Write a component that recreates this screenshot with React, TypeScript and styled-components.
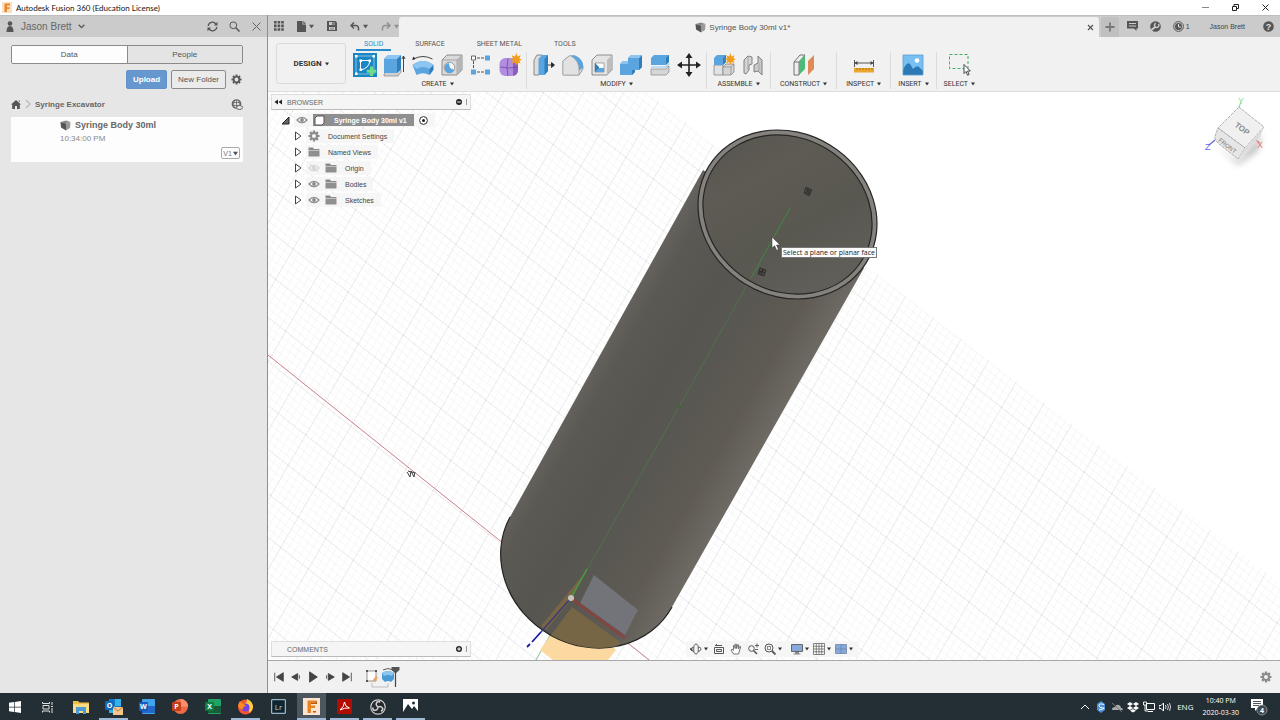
import React from "react";
import styled, { createGlobalStyle } from "styled-components";

const Global = createGlobalStyle`
  * { box-sizing: border-box; }
  body { margin: 0; font-family: "Liberation Sans", Arial, sans-serif; font-size: 8px; color: #444; }
  button, input { font: inherit; color: inherit; }
  button { background: none; border: 0; padding: 0; display: inline-flex; align-items: center; justify-content: center; }
  svg { display: block; flex: none; }
  h1, h2, p, ul { margin: 0; padding: 0; font: inherit; }
  ul { list-style: none; }
`;

/* ---------- shell ---------- */

const Desktop = styled.div`
  min-height: 100vh;
  display: flex;
  flex-direction: column;
  background: #f1f1f1;
  overflow: hidden;
`;

const TitleBar = styled.header`
  height: 15px;
  display: flex;
  align-items: center;
  padding: 0 8px 0 2px;
  gap: 4px;
  background: #fff;
  color: #111;
  font-family: Lato, "Open Sans", sans-serif;
`;
const WindowTitle = styled.h1`
  flex: 1;
  font-size: 8px;
  line-height: 14px;
`;
const WindowButtons = styled.div`
  display: flex;
  gap: 17px;
  color: #222;
`;

const Body = styled.main`
  flex: 1;
  display: flex;
  min-height: 0;
`;

/* ---------- data panel ---------- */

const DataPanel = styled.aside`
  width: 268px;
  flex: none;
  background: #e6e6e6;
  border-right: 1px solid #8f8f8f;
`;
const PanelHeader = styled.div`
  height: 22px;
  display: flex;
  align-items: center;
  gap: 11px;
  padding: 0 5px 1px 5px;
  background: #cbcbcb;
  border-top: 1px solid #bdbdbd;
  color: #5a5a5a;
`;
const UserMenu = styled.button`
  gap: 6px;
  margin-right: auto;
  font-size: 10px;
  color: #666;
`;
const PanelBody = styled.div`
  padding: 8px 24px 0 11px;
`;
const TabPair = styled.div`
  display: flex;
  height: 19px;
  border: 1px solid #8b8b8b;
  border-radius: 2px;
  overflow: hidden;
`;
const PairTab = styled.button<{ $active?: boolean }>`
  flex: 1;
  font-size: 8px;
  color: #555;
  background: ${(p) => (p.$active ? "#fdfdfd" : "#e4e4e4")};
  & + & { border-left: 1px solid #8b8b8b; }
`;
const Actions = styled.div`
  display: flex;
  justify-content: flex-end;
  align-items: center;
  gap: 4px;
  margin-top: 6px;
  color: #555;
`;
const ActionButton = styled.button<{ $primary?: boolean }>`
  height: 19px;
  padding: 0 6px;
  font-size: 8px;
  border-radius: 2px;
  border: 1px solid ${(p) => (p.$primary ? "#6192c8" : "#8b8b8b")};
  background: ${(p) => (p.$primary ? "#6698cf" : "#ebebeb")};
  color: ${(p) => (p.$primary ? "#fff" : "#555")};
  font-weight: ${(p) => (p.$primary ? 700 : 400)};
`;
const GearButton = styled.button`
  width: 13px;
  height: 19px;
`;
const Crumbs = styled.nav`
  display: flex;
  align-items: center;
  height: 12px;
  margin-top: 9px;
  gap: 3px;
  font-size: 8px;
  font-weight: 700;
  color: #666;
  span { flex: 1; }
`;
const FileCard = styled.article`
  margin-top: 7px;
  height: 45px;
  background: #fdfdfd;
  padding: 2px 3px 2px 49px;
  display: flex;
  flex-direction: column;
`;
const FileName = styled.h2`
  display: flex;
  align-items: center;
  gap: 4px;
  font-size: 9px;
  line-height: 13px;
  font-weight: 700;
  color: #666;
`;
const FileTime = styled.p`
  font-size: 8px;
  line-height: 13px;
  color: #8a8a8a;
`;
const Version = styled.button`
  align-self: flex-end;
  margin-top: 2px;
  height: 12px;
  width: 19px;
  gap: 1px;
  border: 1px solid #aaa;
  border-radius: 2px;
  font-size: 7px;
  color: #777;
`;

/* ---------- workspace ---------- */

const Workspace = styled.section`
  flex: 1;
  min-width: 0;
  display: flex;
  flex-direction: column;
`;
const AppBar = styled.div`
  height: 22px;
  display: flex;
  background: #cbcbcb;
  border-top: 1px solid #bdbdbd;
  color: #5a5a5a;
`;
const QuickAccess = styled.div`
  width: 131px;
  flex: none;
  display: flex;
  align-items: center;
  gap: 13px;
  padding: 0 0 1px 6px;
`;
const QuickButton = styled.button<{ $faded?: boolean }>`
  gap: 3px;
  opacity: ${(p) => (p.$faded ? 0.5 : 1)};
`;
const DocumentTab = styled.div`
  flex: 1;
  display: flex;
  align-items: center;
  margin-top: 1px;
  padding: 0 5px 0 0;
  background: #f1f1f1;
  border-radius: 3px 3px 0 0;
`;
const DocumentName = styled.span`
  flex: 1;
  display: flex;
  justify-content: center;
  align-items: center;
  gap: 3px;
  font-size: 8px;
  color: #555;
`;
const AccountBar = styled.div`
  display: flex;
  align-items: center;
  gap: 12px;
  padding: 0 6px 1px 2px;
  font-size: 7px;
  color: #444;
`;
const AddTab = styled.button`
  align-self: stretch;
  width: 18px;
  background: #c0c0c0;
  border-radius: 3px 3px 0 0;
  margin: 1px -4px -1px 0;
`;
const AccountButton = styled.button<{ $name?: boolean }>`
  gap: 2px;
  padding: ${(p) => (p.$name ? "0 6px 0 8px" : "0")};
`;

const Ribbon = styled.div`
  height: 55px;
  display: flex;
  background: #f1f1f1;
  border-bottom: 1px solid #dcdcdc;
  font-family: Roboto, sans-serif;
  font-size: 7px;
  color: #333;
`;
const DesignButton = styled.button`
  width: 70px;
  height: 41px;
  margin: 6px 5px 0 8px;
  flex: none;
  gap: 3px;
  font-size: 8px;
  font-weight: 700;
  border: 1px solid #dadada;
  border-radius: 3px;
`;
const RibbonBody = styled.div`
  display: flex;
  flex-direction: column;
`;
const RibbonTabs = styled.div`
  display: flex;
  height: 14px;
  gap: 16px;
  padding-left: 5px;
`;
const RibbonTab = styled.button<{ $active?: boolean }>`
  padding: 2px 8px 0;
  color: ${(p) => (p.$active ? "#2a8cc7" : "#555")};
  border-bottom: 2px solid ${(p) => (p.$active ? "#2a8cc7" : "transparent")};
`;
const Groups = styled.div`
  display: flex;
  padding-top: 1px;
`;
const Group = styled.div<{ $pad: number }>`
  display: flex;
  flex-direction: column;
  align-items: center;
  height: 37px;
  padding: 0 ${(p) => p.$pad}px;
  border-right: 1px solid #dcdcdc;
  &:first-child { padding-left: 2px; padding-right: 4px; }
  &:last-child { border-right: 0; }
`;
const Tools = styled.div`
  display: flex;
  gap: 5px;
`;
const Tool = styled.button`
  width: 24px;
  height: 26px;
`;
const GroupMenu = styled.button`
  height: 11px;
  gap: 3px;
`;

const Canvas = styled.div`
  flex: 1;
  min-height: 0;
  position: relative;
  background: #fff;
  overflow: hidden;
`;
const Scene = styled.svg`
  position: absolute;
  inset: 0;
  width: 100%;
  height: 100%;
`;
const BrowserPanel = styled.div`
  position: absolute;
  top: 2px;
  left: 3px;
  width: 200px;
`;
const DockHeader = styled.div`
  height: 16px;
  display: flex;
  align-items: center;
  background: #f5f5f5;
  border: 1px solid #dedede;
  border-bottom-color: #bbb;
  font-size: 7px;
  color: #666;
  padding: 0 1px 0 2px;
  gap: 3px;
  span { flex: 1; padding-left: 2px; }
`;
const CommentsDock = styled.div`
  position: absolute;
  left: 3px;
  bottom: 3px;
  width: 200px;
  span { padding-left: 13px; }
`;
const Tree = styled.ul`
  padding-top: 2px;
`;
const Node = styled.li<{ $depth: number }>`
  height: 16px;
  display: flex;
  align-items: center;
  padding-left: ${(p) => (p.$depth ? 23 : 10)}px;
  gap: 4px;
  font-size: 7px;
  color: #444;
`;
const NodeBody = styled.div`
  display: flex;
  align-items: center;
  height: 14px;
  gap: 5px;
  padding: 0 7px 0 2px;
  background: rgba(245, 245, 245, 0.9);
`;
const NodeLabel = styled.span<{ $indent: number }>`
  padding-left: ${(p) => p.$indent}px;
`;
const RootLabel = styled.div`
  display: flex;
  align-items: center;
  gap: 9px;
  height: 12px;
  padding: 0 7px 0 1px;
  background: #8f8f8f;
  color: #fff;
  font-weight: 700;
`;
const Tooltip = styled.div`
  position: absolute;
  left: 513px;
  top: 155px;
  height: 11px;
  padding: 0 1px;
  background: #fbfbfb;
  border: 1px solid #777;
  color: #222;
  font-family: "Open Sans", "Noto Sans", sans-serif;
  font-size: 7px;
  line-height: 9px;
  white-space: nowrap;
`;
const NavBar = styled.div`
  position: absolute;
  left: 50%;
  bottom: 3px;
  margin-left: -88px;
  height: 16px;
  display: flex;
  align-items: center;
  gap: 5px;
  padding: 0 6px 0 4px;
  background: rgba(245, 245, 245, 0.9);
`;
const NavGroup = styled.div`
  display: flex;
  align-items: center;
  gap: 5px;
  & + & { gap: 4px; margin-left: 4px; }
`;
const NavButton = styled.button`
  gap: 2px;
`;

const Timeline = styled.div`
  height: 33px;
  display: flex;
  align-items: center;
  gap: 3px;
  padding: 0 8px 0 4px;
  border-top: 1px solid #a8a8a8;
  background: #f1f1f1;
  color: #444;
`;
const PlayButton = styled.button`
  width: 14px;
  height: 14px;
`;
const History = styled.div`
  flex: 1;
  padding-left: 7px;
`;

/* ---------- taskbar ---------- */

const Taskbar = styled.footer`
  height: 27px;
  display: flex;
  align-items: stretch;
  background: #242f35;
  color: #fff;
  font-family: "Open Sans", "Noto Sans", sans-serif;
  font-size: 8px;
`;
const Pinned = styled.div`
  flex: 1;
  display: flex;
  gap: 4px;
`;
const TaskButton = styled.button<{ $open?: boolean; $active?: boolean }>`
  width: 29px;
  padding-top: ${(p) => (p.$open ? 2 : 0)}px;
  background: ${(p) => (p.$active ? "#4c565c" : "transparent")};
  border-bottom: ${(p) => (p.$open ? "2px solid #9fb9d6" : "0")};
`;
const Tray = styled.div`
  display: flex;
  align-items: center;
  gap: 4px;
  padding-right: 12px;
`;
const TrayButton = styled.button`
  width: 12px;
  height: 20px;
`;
const Language = styled.span`
  margin: 0 5px 0 2px;
`;
const Clock = styled.time`
  text-align: center;
  font-size: 7px;
  line-height: 12px;
  margin-right: 7px;
  span { display: block; }
`;

/* ---------- small glyphs ---------- */

const Caret = ({ s = 4, c = "#333" }: { s?: number; c?: string }) => (
  <svg width={s} height={s} viewBox="0 0 4 4"><path d="M0 .6h4L2 3.6z" fill={c} /></svg>
);

const Gear = ({ s = 12, c = "#5a5a5a" }: { s?: number; c?: string }) => (
  <svg width={s} height={s} viewBox="0 0 24 24">
    <g stroke={c} strokeWidth="4.400">
      {[0, 45, 90, 135].map((a) => <path key={a} d="M12 1v5M12 18v5" transform={`rotate(${a} 12 12)`} />)}
    </g>
    <circle cx="12" cy="12" r="6" fill="none" stroke={c} strokeWidth="3.800" />
  </svg>
);

const Cube = ({ s = 11 }: { s?: number }) => (
  <svg width={s} height={s} viewBox="0 0 22 22">
    <path d="M1 4 12 1l9 3-9 3z" fill="#8a8a8a" />
    <path d="M1 4l11 3v14L2 15z" fill="#555" />
    <path d="M12 7l9-3-1 12-8 5z" fill="#999" />
  </svg>
);

const Eye = ({ off }: { off?: boolean }) => (
  <svg width="12" height="10" viewBox="0 0 24 20" opacity={off ? 0.3 : 1}>
    <path d="M2 10Q12-1 22 10 12 21 2 10z" fill="none" stroke="#8a8a8a" strokeWidth="2.400" />
    <circle cx="12" cy="10" r="3.800" fill="#8a8a8a" />
    {off && <path d="M4 2l16 16" stroke="#8a8a8a" strokeWidth="2" />}
  </svg>
);

const Folder = () => (
  <svg width="12" height="10" viewBox="0 0 24 20">
    <path d="M1 1h9l2 3h11v2H1z" fill="#8a8a8a" /><path d="M1 7h22v12H1z" fill="#8f8f8f" />
  </svg>
);

const Expander = () => (
  <svg width="8" height="10" viewBox="0 0 8 10"><path d="M1.500 1v8L7 5z" fill="#fff" stroke="#444" strokeWidth="1" /></svg>
);

const DockGrip = ({ plus }: { plus?: boolean }) => (
  <svg width="14" height="10" viewBox="0 0 14 10">
    <circle cx="4" cy="5" r="3" fill="#222" />
    <path d={plus ? "M2.200 5h3.600M4 3.200v3.600" : "M2.200 5h3.600"} stroke="#fff" strokeWidth="1" />
    <path d="M11.500 2v6" stroke="#999" />
  </svg>
);

/* ---------- ribbon icons ---------- */

const blue = "#5aa5df";
const dark = "#2f7fbd";
const icon: Record<string, React.ReactNode> = {
  sketch: (<><path d="M0 0h24v24H0z" fill="#1b86c4" /><path d="M3 3h18v18H3z" fill="none" stroke="#9fd0ee" strokeWidth=".8" /><path d="M7.500 17V7.500H17q-1 8-9.500 9.500z" fill="none" stroke="#fff" /><path d="M2 2h2.500v2.500H2zM19.500 2H22v2.500h-2.500zM2 19.500h2.500V22H2zM6.500 6.500H9V9H6.500zM15.500 6.500H18V9h-2.500zM6.500 15.500H9V18H6.500z" fill="#fff" /><path d="M18.500 13.500v9.500M13.800 18.300h9.500" stroke="#6fdc8c" strokeWidth="3" /></>),
  extrude: (<><path d="M2 21l4-4h13v2l-3 4H2z" fill="#d0d0d0" stroke="#777" strokeWidth=".6" /><path d="M2 6l4-4h13v14l-4 4H2z" fill={blue} /><path d="M15 20V6l4-4v14z" fill={dark} /><path d="M2 6l4-4h13l-4 4z" fill="#8cc5ef" /><path d="M21.500 19V4M20 6l1.500-3L23 6" fill="none" stroke="#333" strokeWidth=".9" /></>),
  revolve: (<><path d="M1.500 12q10.500-8 21 0l-4 10q-6.500-3.500-13 0z" fill={blue} /><path d="M1.500 12q10.500-8 21 0l-4 4q-6.500-4-13 0z" fill="#8cc5ef" /><path d="M18.500 16l4-4v5l-4 5z" fill={dark} /><path d="M2.500 6q9.500-5 19 0" fill="none" stroke="#333" strokeWidth=".9" /><path d="M1 7l1.500-3.500L4.500 6z" fill="#222" /></>),
  hole: (<><path d="M2 7l5-5h15v15l-5 5H2z" fill="#dadada" stroke="#777" strokeWidth=".8" /><path d="M2 7h15v15M17 7l5-5" fill="none" stroke="#999" strokeWidth=".8" /><path d="M17 7l5-5v15l-5 5z" fill="#b5b5b5" /><circle cx="9.500" cy="14.500" r="5.300" fill="#f4f4f4" stroke="#777" strokeWidth=".7" /><path d="M9 10q0 7 5.500 6.500A5 5 0 119 10z" fill={blue} /></>),
  pattern: (<><path d="M8 5h8M4.500 8v8M8 19h8" fill="none" stroke="#555" strokeWidth="1" strokeDasharray="3 1" /><path d="M2.500 3h4v4h-4z" fill="#fff" stroke="#555" strokeWidth=".9" /><path d="M16 2.500h5v5h-5zM2 16.500h5v5H2zM16 16.500h5v5h-5z" fill={blue} /></>),
  form: (<><rect x="1.500" y="5" width="18.500" height="18" rx="6" fill="#b18de0" /><path d="M15 7q5 1 5 6v4q0 5-5 6z" fill="#8a5fc2" /><path d="M2 14q8 2 18 0M10 5.500q-2 8 0 17.500" fill="none" stroke="#7146a8" strokeWidth=".8" /><path d="M18 0l1.500 4L23 2.500 21.500 6l3 1.500-3 1.200 1.500 3.300-3.500-1.500L18 14l-1.300-3.500L13 12l1.500-3.500L11 7.300 14.500 6 13 2.500l3.700 1.500z" fill="#f29c1c" transform="translate(2 0) scale(.9)" /></>),
  press: (<><path d="M2 7l3-5h5v17l-3 3H2z" fill="#ddd" stroke="#777" strokeWidth=".8" /><path d="M6.500 6l3.500-4h6v16l-3.500 4h-6z" fill={blue} /><path d="M12.500 6L16 2v16l-3.500 4z" fill={dark} /><path d="M16 12h5M19.500 9.500l3 2.500-3 2.500z" fill="#222" stroke="#222" strokeWidth=".8" /></>),
  fillet: (<><path d="M2 22V8l6-5h6q8 3 8 13l-4 6z" fill="#d9d9d9" stroke="#888" strokeWidth=".8" /><path d="M9 2.500h5q8 3 8.500 12l-4.500 3Q18 7 9 2.500z" fill={blue} /><path d="M2 8l7-5.500Q18 7 18 17.500V22H2z" fill="#e2e2e2" stroke="#999" strokeWidth=".6" /></>),
  shell: (<><path d="M2 7l5-5h15v15l-5 5H2z" fill="#e4e4e4" stroke="#777" strokeWidth=".8" /><path d="M17 7l5-5v15l-5 5z" fill="#bdbdbd" /><path d="M5 10h9v9H5z" fill="#fff" stroke="#888" strokeWidth=".7" /><path d="M5 10l4 4v5H5z" fill={dark} /><path d="M5 19l4-4h5v4z" fill={blue} /></>),
  combine: (<><path d="M9 5l3-3h11v12l-3 3h-4v2l-3 3H1V11l3-3h5z" fill={blue} /><path d="M20 17V5l3-3v12zM13 22v-5h3v2z" fill={dark} /><path d="M9 5l3-3h11l-3 3zM1 11l3-3h5v3z" fill="#8cc5ef" /></>),
  split: (<><path d="M3 5l3-3h15v7l-3 3H3z" fill={blue} /><path d="M18 5l3-3v7l-3 3z" fill={dark} /><path d="M1 15l3-2h13l4-3h2l-4 5z" fill="#9fd0f3" stroke="#fff" strokeWidth=".6" /><path d="M3 16h15l3-3v6l-3 3H3z" fill="#d6d6d6" stroke="#888" strokeWidth=".7" /></>),
  move: (<><path d="M12 3v18M3 12h18" stroke="#222" strokeWidth="1.600" /><path d="M12 0l3.500 5h-7zM12 24l3.500-5h-7zM0 12l5-3.500v7zM24 12l-5-3.500v7z" fill="#222" /></>),
  assemble: (<><path d="M2 12h9v10H2z" fill="#e2e2e2" stroke="#888" strokeWidth=".8" /><path d="M11 14l3-3h8v8l-3 3h-8z" fill="#d5d5d5" stroke="#888" strokeWidth=".8" /><path d="M11 14h8v8M19 14l3-3" fill="none" stroke="#888" strokeWidth=".7" /><path d="M2 5l3-3h9v7l-3 3H2z" fill={blue} /><path d="M11 5l3-3v7l-3 3z" fill={dark} /><path d="M18 0l1.500 4L23 2.500 21.500 6l3 1.500-3 1.200 1.500 3.300-3.500-1.500L18 14l-1.300-3.500L13 12l1.500-3.500L11 7.300 14.500 6 13 2.500l3.700 1.500z" fill="#f29c1c" transform="translate(3 0) scale(.85)" /></>),
  joint: (<><path d="M3 7l4-4 4 1v7l-3 1v5l-3 4-2-1z" fill="#d3d3d3" stroke="#777" strokeWidth=".9" /><path d="M21 7l-4-4v7l-4 2v7l4-1 4 4z" fill="#c9c9c9" stroke="#777" strokeWidth=".9" /><path d="M7 4v13M18 10v8" stroke="#999" strokeWidth=".7" /></>),
  plane: (<><path d="M2 9l6-7h5L7 9v13H2z" fill="#eee" stroke="#555" strokeWidth=".8" /><path d="M2 9h5" stroke="#555" strokeWidth=".8" /><path d="M7 9l6-7v14l-6 6z" fill="#4dbb78" /><path d="M16 8l6-6v14l-6 6z" fill="#e08a5a" /></>),
  measure: (<><path d="M2.500 7v7M21.500 7v7M3 10h18" stroke="#444" strokeWidth=".9" /><path d="M2.500 10l3-2v4zM21.500 10l-3-2v4z" fill="#444" /><path d="M2 15h20v4.500H2z" fill="#eda52d" /><path d="M5 15v2M8 15v2M11 15v2M14 15v2M17 15v2M20 15v2" stroke="#9b6410" strokeWidth=".7" /></>),
  insert: (<><path d="M2 2h20v20H2z" fill="#79c0f2" /><circle cx="16" cy="7.500" r="2.300" fill="#fff" /><path d="M2 17q4-9 7-6 2 3 3 5 4-4 6-2l4 4v4H2z" fill="#2d79b5" /><path d="M2 2h20v20H2z" fill="none" stroke="#5a9fd2" strokeWidth=".8" /></>),
  select: (<><path d="M2.500 1.500H21v14H2.500z" fill="none" stroke="#3fae6d" strokeWidth="1" strokeDasharray="3 2" /><path d="M17 11.500v9l2-2 1.600 3.800 1.500-.8-1.600-3.500h2.800z" fill="#fff" stroke="#333" strokeWidth=".9" /></>),
};

const groups: { name: string; pad: number; tools: string[] }[] = [
  { name: "CREATE", pad: 5, tools: ["sketch", "extrude", "revolve", "hole", "pattern", "form"] },
  { name: "MODIFY", pad: 5, tools: ["press", "fillet", "shell", "combine", "split", "move"] },
  { name: "ASSEMBLE", pad: 5, tools: ["assemble", "joint"] },
  { name: "CONSTRUCT", pad: 9, tools: ["plane"] },
  { name: "INSPECT", pad: 9, tools: ["measure"] },
  { name: "INSERT", pad: 7, tools: ["insert"] },
  { name: "SELECT", pad: 7, tools: ["select"] },
];

/* ---------- 3D view ---------- */

const ModelView = () => (
  <Scene viewBox="268 92 1012 568" preserveAspectRatio="xMidYMid slice" aria-label="Model view">
    <defs>
      <pattern id="fine" width="7" height="7" patternUnits="userSpaceOnUse" patternTransform="matrix(.787 .616 -.5 .866 571 598)">
        <path d="M0 0h7M0 0v7" stroke="#efeff1" strokeWidth="1" fill="none" />
      </pattern>
      <pattern id="major" width="35" height="35" patternUnits="userSpaceOnUse" patternTransform="matrix(.787 .616 -.5 .866 571 598)">
        <path d="M0 0h35M0 0v35" stroke="#dadade" strokeWidth="1" fill="none" strokeDasharray="2 1" />
      </pattern>
      <linearGradient id="body" gradientUnits="userSpaceOnUse" x1="604" y1="346" x2="768" y2="440">
        <stop offset="0" stopColor="#65625d" /><stop offset=".1" stopColor="#5b5953" />
        <stop offset=".35" stopColor="#56554f" /><stop offset=".55" stopColor="#595751" />
        <stop offset=".8" stopColor="#5f5b54" /><stop offset="1" stopColor="#6e6a64" />
      </linearGradient>
      <linearGradient id="cap" x1="0" y1="0" x2="1" y2=".5">
        <stop offset="0" stopColor="#55544e" /><stop offset=".35" stopColor="#5e5b54" />
        <stop offset=".7" stopColor="#585750" /><stop offset="1" stopColor="#605e58" />
      </linearGradient>
      <clipPath id="tube"><path d="M703 170L510 517A92 83 31 00 672 607L864 268z" /></clipPath>
    </defs>
    <path d="M268 92H648L866 266 1280 583V660H268z" fill="url(#fine)" />
    <path d="M268 92H648L866 266 1280 583V660H268z" fill="url(#major)" />
    <path d="M268 355L649 660" stroke="#c97f86" strokeWidth="1" />
    <path d="M571 598L536 660" stroke="#8bc48b" strokeWidth="1" />
    <path d="M572 606L540 650 553 660H608L616 650z" fill="#fbd9a0" />
    <path d="M703 170L510 517A92 83 31 00 672 607L864 268z" fill="url(#body)" />
    <path d="M510 517A92 83 31 00 672 607" fill="none" stroke="#222" strokeWidth="1.200" />
    <g clipPath="url(#tube)">
      <path d="M572 607L540 650 560 670H600L620 642z" fill="#7b6843" opacity=".85" />
      <path d="M582 576L541 626 546 630 571 600z" fill="#7b6843" opacity=".85" />
      <path d="M594 575L638 610 625 635 580 603z" fill="#73737a" />
      <path d="M571 598L625 638" stroke="#8c4240" strokeWidth="3" opacity=".8" />
      <path d="M500 542L571 598" stroke="#6a4f49" strokeWidth="1" opacity=".6" />
    </g>
    <path d="M571 598L679 407 790 208" fill="none" stroke="#4c7a46" strokeWidth="1" opacity=".8" />
    <path d="M571 598L587 569" stroke="#45a03a" strokeWidth="1.500" />
    <path d="M571 598L541 632" stroke="#3f3a78" strokeWidth="1.500" />
    <path d="M541 632L532 642M530 644l-3 3" stroke="#1c1ca8" strokeWidth="1.800" />
    <circle cx="571" cy="598" r="3" fill="#c9c5bb" />
    <circle cx="679" cy="406" r="1.500" fill="#3f6b38" />
    <g transform="rotate(31.400 787.500 214.500)">
      <ellipse cx="787.500" cy="214.500" rx="92.300" ry="81.400" fill="#85827e" stroke="#262626" strokeWidth="1.200" />
      <ellipse cx="787.500" cy="214.500" rx="87.400" ry="76.500" fill="url(#cap)" stroke="#262626" strokeWidth="1.200" />
    </g>
    <path d="M790 208L751 278" stroke="#3f8a42" strokeWidth="1" />
    <g fill="#3a3a36" stroke="#2b2b2b" strokeWidth=".8" fillOpacity=".5">
      <path d="M806 187l6 3-3 6-5-3zM806 189l4 5M811 190l-6 3M808 188l0 7" />
      <path d="M760 268l6 2-2 6-6-2zM759 271l6 2M763 269l-2 6M759 273l5-3" />
    </g>
    <path d="M407 472l3 5 1-6 3 6 1-5M408 471l7 2" fill="none" stroke="#444" strokeWidth="1" />
    <path d="M772 237v11l2.600-2.300 2 4.500 1.900-.8-2-4.400h3.500z" fill="#fff" stroke="#333" strokeWidth=".5" />
    <ViewCube />
  </Scene>
);

const ViewCube = () => (
  <g fontFamily="Liberation Sans, sans-serif">
    <defs>
      <filter id="soft" x="-50%" y="-50%" width="200%" height="200%"><feGaussianBlur stdDeviation="3" /></filter>
    </defs>
    <path d="M1216 145l22 16 24-28-4 18-20 14z" fill="#999" opacity=".6" filter="url(#soft)" />
    <path d="M1239 107l2-5" stroke="#86e59a" strokeWidth="1.200" />
    <path d="M1254 139l6 4" stroke="#e58a8f" strokeWidth="1.500" />
    <path d="M1215 140l-6 5" stroke="#6f6fdc" strokeWidth="1.500" />
    <path d="M1239 107l25 20-19 21-27-20z" fill="#f0f0f0" stroke="#999" strokeWidth=".8" strokeDasharray="3 1" />
    <path d="M1218 128l27 20-7 11-20-16q-4-4-3-7z" fill="#e6e6e6" stroke="#999" strokeWidth=".8" strokeDasharray="3 1" />
    <path d="M1245 148l19-21-4 10-22 22z" fill="#dcdcdc" />
    <text x="1234" y="126" fontSize="8" fontWeight="700" fill="#8c8c8c" transform="rotate(37 1234 126)">TOP</text>
    <text x="1218" y="141" fontSize="6" fill="#777" transform="rotate(38 1218 141)">FRONT</text>
    <text x="1238" y="104" fontSize="9" fill="#86e59a">Y</text>
    <text x="1257" y="148" fontSize="9" fill="#e8777d">X</text>
    <text x="1205" y="150" fontSize="9" fill="#6464e0">Z</text>
  </g>
);

/* ---------- page parts ---------- */

const TreeRow = ({ label, hidden, kind }: { label: string; hidden?: boolean; kind: "gear" | "folder" | "item" }) => (
  <Node $depth={1}>
    <Expander />
    <NodeBody>
      {kind === "gear" && <Gear s={12} c="#8a8a8a" />}
      {kind === "folder" && <Folder />}
      {kind === "item" && (<><Eye off={hidden} /><Folder /></>)}
      <NodeLabel $indent={3}>{label}</NodeLabel>
    </NodeBody>
  </Node>
);

const playPaths: [string, string][] = [
  ["To start", "M2 2v10M12 2v10L4 7z"],
  ["Step back", "M9 3v8L2 7zM11 5v4"],
  ["Play", "M3 1v12l9-6z"],
  ["Step forward", "M5 3v8l7-4zM3 5v4"],
  ["To end", "M12 2v10M2 2v10l8-5z"],
];

type NavIcon = [string, React.ReactNode, boolean];
const viewTools: NavIcon[] = [
  ["Orbit", <g key="a" fill="none" stroke="#555" strokeWidth=".9"><ellipse cx="6" cy="6" rx="2.300" ry="5" /><path d="M1 6q1-2 3-2M8 4q3 0 3 2 0 2-3 2.500M1 6q0 2 3 2.500" /><path d="M0 6l2-1v3z" fill="#555" /></g>, true],
  ["Look at", <g key="a" fill="none" stroke="#555"><path d="M1.500 4.500h9v6h-9zM3.500 6.500h5v2h-5zM3 2.500h6M2 3l2-2" /></g>, false],
  ["Pan", <path key="a" d="M3.500 11L1 7l1-.7 1.500 1V2.500l1-.3.7 3.300V1.200h1.200l.2 4.300L7.700 1.700l1 .2-.2 4 1.300-2.500.9.4L9.200 9 8.500 11z" fill="#fff" stroke="#555" strokeWidth=".8" />, false],
  ["Zoom", <g key="a" fill="none" stroke="#555"><circle cx="4.500" cy="5.500" r="2.800" /><path d="M6.500 7.500l3.500 3.500" strokeWidth="1.600" /><path d="M8 2.500h4M10 .5v4M8 6.500h3" strokeWidth=".9" /></g>, false],
  ["Fit", <g key="a" fill="none" stroke="#555"><circle cx="5" cy="5" r="4" /><path d="M3.500 3.500h3v3h-3z" strokeWidth=".7" /><path d="M8 8l3.500 3.500" strokeWidth="1.800" /></g>, true],
];
const displayTools: NavIcon[] = [
  ["Display settings", <g key="a"><path d="M.5 1.500h11v7H.5z" fill="#86a9dc" stroke="#666" /><path d="M4 9h4v1.500h1.500v1h-7v-1H4z" fill="#888" /></g>, true],
  ["Grid settings", <path key="a" d="M.5.5h11v11H.5zM3.250.5v11M6 .5v11M8.750.5v11M.5 3.250h11M.5 6h11M.5 8.750h11" fill="#fff" stroke="#666" strokeWidth=".8" />, true],
  ["Viewports", <path key="a" d="M.5 1.500h11v9H.5zM6 1.500v9M.5 6h11" fill="#86a9dc" stroke="#7084a8" strokeWidth=".8" />, true],
];

const office = (letter: string, a: string, b: string, c: string) => (
  <svg width="18" height="18" viewBox="0 0 18 18">
    <rect x="4" y="1" width="13" height="15" rx="1" fill={a} /><path d="M4 8h13v7H4z" fill={b} />
    <rect x="1" y="4" width="9" height="9" rx="1" fill={c} />
    <text x="5.500" y="11" textAnchor="middle" fontSize="7" fontWeight="700" fill="#fff">{letter}</text>
  </svg>
);

const tasks: { name: string; open?: boolean; active?: boolean; art: React.ReactNode }[] = [
  { name: "Start", art: <svg width="12" height="12" viewBox="0 0 12 12"><path d="M0 1.700l5-.7v4.700H0zM5.700.9L12 0v5.700H5.700zM0 6.400h5V11l-5-.7zM5.700 6.400H12V12l-6.300-.9z" fill="#fff" /></svg> },
  { name: "Task view", art: <svg width="12" height="12" viewBox="0 0 12 12"><path d="M.5 1v1.500h7V1M1 4.500h6v3.500H1zM.5 11.500V10h7v1.500M10 1v3M10 7v5M9 5.500h2" fill="none" stroke="#ddd" /></svg> },
  { name: "File Explorer", art: <svg width="16" height="14" viewBox="0 0 16 14"><path d="M0 1h5l1.500 1.500H16V13H0z" fill="#f0bf4a" /><path d="M0 4h16v9H0z" fill="#fbdc82" /><path d="M3 7h10v7h-3v-3H6v3H3z" fill="#4a9bd8" /></svg> },
  { name: "Outlook", open: true, art: <svg width="20" height="18" viewBox="0 0 20 18"><rect x="5" y="1" width="12" height="14" fill="#35b1ea" /><path d="M5 1h6v7H5zM11 8h6v7h-6z" fill="#1478c8" /><rect x="1" y="3" width="9" height="9" rx="1" fill="#0f6cbd" /><text x="5.500" y="10" textAnchor="middle" fontSize="7" fontWeight="700" fill="#fff">O</text><path d="M9 9h10v8H9z" fill="#f6c58b" /><path d="M9 9l5 4 5-4" fill="none" stroke="#b97e3c" /></svg> },
  { name: "Word", art: office("W", "#41a5ee", "#2368c4", "#185abd") },
  { name: "PowerPoint", art: <svg width="18" height="18" viewBox="0 0 18 18"><circle cx="9.500" cy="8.500" r="7.500" fill="#ed6c47" /><path d="M9.500 1A7.500 7.500 0 0117 8.500H9.500z" fill="#ff8f6b" /><rect x="1" y="4" width="9" height="9" rx="1" fill="#c43e1c" /><text x="5.500" y="11" textAnchor="middle" fontSize="7" fontWeight="700" fill="#fff">P</text></svg> },
  { name: "Excel", art: office("X", "#21a366", "#185c37", "#107c41") },
  { name: "Firefox", open: true, art: <svg width="17" height="17" viewBox="0 0 17 17"><circle cx="8.500" cy="9" r="7.500" fill="#f5562e" /><path d="M10 1q5 2 6 7 0 5-4 7 1-8-5-9 3-1 3-5z" fill="#ffcf3f" /><circle cx="8.500" cy="9.500" r="4" fill="#7542e5" /><path d="M1 8q1-4 2-5 1 2 4 3l2 2q-3 0-3 3-3 1-5-3z" fill="#ff8a1e" /></svg> },
  { name: "Lightroom", art: <svg width="15" height="15" viewBox="0 0 15 15"><path d="M.7.7h13.600v13.600H.7z" fill="#0e2430" stroke="#b5d4e6" /><text x="7.500" y="10.500" textAnchor="middle" fontSize="8" fill="#b5d4e6">Lr</text></svg> },
  { name: "Fusion 360", open: true, active: true, art: <svg width="17" height="17" viewBox="0 0 17 17"><path d="M0 0h17v17H0z" fill="#fbe5d0" /><path d="M4.500 2.500H13V5H8v2.500h4V10H8v5H4.500z" fill="#e88324" /><path d="M8 5h5V2.500l1 1V6H8zM10 13h3v1.500h-3z" fill="#b55a10" /></svg> },
  { name: "Acrobat", open: true, art: <svg width="15" height="15" viewBox="0 0 15 15"><path d="M0 0h15v15H0z" fill="#b30b00" /><path d="M3 11q4-3 4.500-8 .5 5 5 6-5-.5-9.500 2z" fill="none" stroke="#fff" /></svg> },
  { name: "OBS Studio", open: true, art: <svg width="16" height="16" viewBox="0 0 16 16"><circle cx="8" cy="8" r="7.200" fill="#26272b" stroke="#d0d0d0" strokeWidth="1.200" /><g fill="none" stroke="#d0d0d0" strokeWidth="1.500">{[0, 120, 240].map((a) => <path key={a} d="M8 8Q5 6 7 3q2-1 3 .5" transform={`rotate(${a} 8 8)`} />)}</g></svg> },
  { name: "Photos", open: true, art: <svg width="15" height="15" viewBox="0 0 15 15"><path d="M0 0h15v15H0z" fill="#fff" /><path d="M0 13l5-8 4 5 2-3 4 5v3H0z" fill="#242f35" /><circle cx="10.500" cy="4" r="1.500" fill="#242f35" /></svg> },
];

const tray: [string, React.ReactNode][] = [
  ["Show hidden icons", <path key="t" d="M2 8l4-4 4 4" fill="none" stroke="#fff" />],
  ["Sync", <g key="t"><path d="M2 3l4-3 4 3v6l-4 3-4-3z" fill="#4a90d9" /><path d="M9 3.500Q4 2 4 4.500T8 7t-4 2" fill="none" stroke="#fff" /></g>],
  ["Cloud", <g key="t"><path d="M1 9q0-3 3-3 1-3 4-2 2 1 2 3 2 0 2 2z" fill="#aaa" /><path d="M1 2l10 9" stroke="#777" /></g>],
  ["Dropbox", <path key="t" d="M3 1l3 2-3 2-3-2zM9 1l3 2-3 2-3-2zM3 5l3 2-3 2-3-2zM9 5l3 2-3 2-3-2zM6 8l3 1.700L6 11.500 3 9.700z" fill="#fff" />],
  ["Network", <g key="t" fill="none" stroke="#fff"><path d="M3.500 2.500h8v6h-8zM5 10.500h5" /><path d="M.5 1v3h3V1zM2 4v6h3" strokeWidth=".9" /></g>],
  ["Volume", <g key="t" fill="none" stroke="#fff"><path d="M0 4.500h2l2.500-2.500v8L2 7.500H0z" /><path d="M6.500 4q1 2 0 4M8.500 3q1.800 3 0 6M10.500 2q2.200 4 0 8" strokeWidth=".8" /></g>],
];

export default function App() {
  return (
    <>
      <Global />
      <Desktop>
        <TitleBar>
          <svg width="10" height="11" viewBox="0 0 10 11"><path d="M0 0h10v11H0z" fill="#fbe0c4" /><path d="M2.500 10V1.500H8v2H5v1.700h2.500V7H5v3z" fill="#e8862a" /></svg>
          <WindowTitle>Autodesk Fusion 360 (Education License)</WindowTitle>
          <WindowButtons>
            <button aria-label="Minimize"><svg width="13" height="9" viewBox="0 0 13 9"><path d="M3 4.500h7" stroke="#888" /></svg></button>
            <button aria-label="Restore"><svg width="13" height="9" viewBox="0 0 13 9"><path d="M3.500 3.500h4v4h-4zM5 3V1.500h4.500v4H8" fill="none" stroke="#222" /></svg></button>
            <button aria-label="Close"><svg width="13" height="9" viewBox="0 0 13 9"><path d="M3.500 1.500l6 6M9.500 1.500l-6 6" stroke="#222" /></svg></button>
          </WindowButtons>
        </TitleBar>

        <Body>
          <DataPanel>
            <PanelHeader>
              <UserMenu>
                <svg width="10" height="11" viewBox="0 0 10 11"><circle cx="5" cy="2.500" r="2.300" fill="#555" /><path d="M1.500 11q0-6 3.500-6t3.500 6z" fill="#555" /></svg>
                Jason Brett
                <svg width="7" height="5" viewBox="0 0 7 5"><path d="M.7.8l2.800 2.800L6.300.8" fill="none" stroke="#555" strokeWidth="1.300" /></svg>
              </UserMenu>
              <button aria-label="Refresh"><svg width="11" height="11" viewBox="0 0 11 11"><path d="M1.200 5a4.200 4.200 0 017.600-2M9.800 6a4.200 4.200 0 01-7.600 2" fill="none" stroke="#555" strokeWidth="1.300" /><path d="M10.500.8v3.700H7zM.5 10.200V6.500H4z" fill="#555" /></svg></button>
              <button aria-label="Search"><svg width="11" height="11" viewBox="0 0 11 11"><circle cx="4.300" cy="4.300" r="3.400" fill="none" stroke="#555" /><path d="M6.800 6.800l3.700 3.700" stroke="#555" strokeWidth="1.500" /></svg></button>
              <button aria-label="Close panel"><svg width="11" height="11" viewBox="0 0 11 11"><path d="M1.500 1.500l8 8M9.500 1.500l-8 8" stroke="#666" /></svg></button>
            </PanelHeader>
            <PanelBody>
              <TabPair>
                <PairTab $active>Data</PairTab>
                <PairTab>People</PairTab>
              </TabPair>
              <Actions>
                <ActionButton $primary>Upload</ActionButton>
                <ActionButton>New Folder</ActionButton>
                <GearButton aria-label="Settings"><Gear s={11} /></GearButton>
              </Actions>
              <Crumbs>
                <svg width="10" height="9" viewBox="0 0 10 9"><path d="M5 0l5 4.500H8.800V9H6V6H4v3H1.200V4.500H0zM7.500.5h1.300v2z" fill="#555" /></svg>
                <svg width="8" height="10" viewBox="0 0 8 10"><path d="M2 1l4 4-4 4" fill="none" stroke="#bbb" strokeWidth="1.300" /></svg>
                <span>Syringe Excavator</span>
                <svg width="12" height="11" viewBox="0 0 12 11"><circle cx="5.500" cy="5" r="4.200" fill="none" stroke="#666" strokeWidth="1.300" /><path d="M1 3.500h9M1 6.500h9M5.500 1v8.500M3.500 1q-2 4 0 8M7.500 1q2 4 0 8" fill="none" stroke="#666" strokeWidth=".8" /><ellipse cx="8.500" cy="8.500" rx="3" ry="2" fill="#e6e6e6" stroke="#666" /></svg>
              </Crumbs>
              <FileCard>
                <FileName><Cube s={11} />Syringe Body 30ml</FileName>
                <FileTime>10:34:00 PM</FileTime>
                <Version>V1<Caret s={5} c="#555" /></Version>
              </FileCard>
            </PanelBody>
          </DataPanel>

          <Workspace>
            <AppBar>
              <QuickAccess>
                <QuickButton aria-label="Show data panel"><svg width="10" height="10" viewBox="0 0 10 10"><path d="M0 0h2.600v2.600H0zM3.600 0h2.600v2.600H3.600zM7.200 0h2.600v2.600H7.200zM0 3.600h2.600v2.600H0zM3.600 3.600h2.600v2.600H3.600zM7.200 3.600h2.600v2.600H7.200zM0 7.200h2.600v2.600H0zM3.600 7.200h2.600v2.600H3.600zM7.200 7.200h2.600v2.600H7.200z" fill="#555" /></svg></QuickButton>
                <QuickButton aria-label="File"><svg width="9" height="11" viewBox="0 0 9 11"><path d="M0 0h5.500v3.500H9V11H0zM6.300 0L9 2.800H6.300z" fill="#555" /></svg><Caret s={5} c="#555" /></QuickButton>
                <QuickButton aria-label="Save"><svg width="10" height="10" viewBox="0 0 10 10"><path d="M0 0h8.500L10 1.500V10H0z" fill="#555" /><path d="M2 1h5.500v3H2zM2 6h6v3H2z" fill="#cbcbcb" /><path d="M5.500 1.500h1v2h-1zM3 7h4M3 8.200h4" fill="#555" stroke="#555" strokeWidth=".5" /></svg></QuickButton>
                <QuickButton aria-label="Undo"><svg width="10" height="9" viewBox="0 0 10 9"><path d="M1 3.500h5q3 0 2.500 5M4 .5l-3 3 3 3" fill="none" stroke="#555" strokeWidth="1.500" /></svg><Caret s={5} c="#555" /></QuickButton>
                <QuickButton $faded aria-label="Redo"><svg width="10" height="9" viewBox="0 0 10 9"><path d="M9 3.500H4q-3 0-2.500 5M6 .5l3 3-3 3" fill="none" stroke="#555" strokeWidth="1.500" /></svg><Caret s={5} c="#555" /></QuickButton>
              </QuickAccess>
              <DocumentTab>
                <DocumentName><Cube s={11} />Syringe Body 30ml v1*</DocumentName>
                <button aria-label="Close document"><svg width="7" height="7" viewBox="0 0 7 7"><path d="M1 1l5 5M6 1L1 6" stroke="#555" strokeWidth="1.200" /></svg></button>
              </DocumentTab>
              <AccountBar>
                <AddTab aria-label="New document"><svg width="10" height="10" viewBox="0 0 10 10"><path d="M5 .5v9M.5 5h9" stroke="#777" strokeWidth="1.800" /></svg></AddTab>
                <AccountButton aria-label="Notifications"><svg width="11" height="10" viewBox="0 0 11 10"><path d="M0 0h11v7.500H9.500V10L7 7.500H0z" fill="#555" /><path d="M2 2.500h7M2 5h7" stroke="#cbcbcb" /></svg></AccountButton>
                <AccountButton aria-label="Extensions"><svg width="11" height="11" viewBox="0 0 11 11"><circle cx="5.500" cy="5.500" r="5.300" fill="#555" /><path d="M1 9.500l4-3.500" stroke="#cbcbcb" strokeWidth="1.800" /><path d="M8.500 3A2.200 2.200 0 115.800 2.300" fill="none" stroke="#cbcbcb" strokeWidth="1.500" /></svg></AccountButton>
                <AccountButton><svg width="11" height="11" viewBox="0 0 11 11"><circle cx="5.500" cy="5.500" r="4.900" fill="none" stroke="#555" /><circle cx="5.500" cy="5.500" r="3.500" fill="#555" /><path d="M5.500 3v3H8" fill="none" stroke="#ddd" /></svg>1</AccountButton>
                <AccountButton $name>Jason Brett</AccountButton>
                <AccountButton aria-label="Help"><svg width="11" height="11" viewBox="0 0 11 11"><circle cx="5.500" cy="5.500" r="5.300" fill="#555" /><text x="5.500" y="8.500" textAnchor="middle" fontSize="9" fontWeight="700" fill="#e0e0e0">?</text></svg></AccountButton>
              </AccountBar>
            </AppBar>

            <Ribbon>
              <DesignButton>DESIGN <Caret /></DesignButton>
              <RibbonBody>
                <RibbonTabs>
                  <RibbonTab $active>SOLID</RibbonTab>
                  <RibbonTab>SURFACE</RibbonTab>
                  <RibbonTab>SHEET METAL</RibbonTab>
                  <RibbonTab>TOOLS</RibbonTab>
                </RibbonTabs>
                <Groups>
                  {groups.map((g) => (
                    <Group key={g.name} $pad={g.pad}>
                      <Tools>
                        {g.tools.map((t) => (
                          <Tool key={t} aria-label={t}>
                            <svg width="24" height="24" viewBox="0 0 24 24">{icon[t]}</svg>
                          </Tool>
                        ))}
                      </Tools>
                      <GroupMenu>{g.name}<Caret /></GroupMenu>
                    </Group>
                  ))}
                </Groups>
              </RibbonBody>
            </Ribbon>

            <Canvas>
              <ModelView />
              <BrowserPanel>
                <DockHeader>
                  <svg width="8" height="6" viewBox="0 0 8 6"><path d="M4 .5v5L.5 3zM8 .5v5L4.500 3z" fill="#222" /></svg>
                  <span>BROWSER</span>
                  <DockGrip />
                </DockHeader>
                <Tree>
                  <Node $depth={0}>
                    <svg width="9" height="9" viewBox="0 0 9 9"><path d="M8 1v7H1z" fill="#666" stroke="#222" /></svg>
                    <NodeBody>
                      <Eye />
                      <RootLabel>
                        <svg width="11" height="11" viewBox="0 0 11 11"><path d="M1 3l2-2h7v7l-2 2H1z" fill="#fff" stroke="#555" /></svg>
                        Syringe Body 30ml v1
                      </RootLabel>
                      <svg width="9" height="9" viewBox="0 0 9 9"><circle cx="4.500" cy="4.500" r="3.900" fill="#fff" stroke="#333" /><circle cx="4.500" cy="4.500" r="1.500" fill="#222" /></svg>
                    </NodeBody>
                  </Node>
                  <TreeRow kind="gear" label="Document Settings" />
                  <TreeRow kind="folder" label="Named Views" />
                  <TreeRow kind="item" label="Origin" hidden />
                  <TreeRow kind="item" label="Bodies" />
                  <TreeRow kind="item" label="Sketches" />
                </Tree>
              </BrowserPanel>
              <Tooltip role="tooltip">Select a plane or planar face</Tooltip>
              <CommentsDock>
                <DockHeader><span>COMMENTS</span><DockGrip plus /></DockHeader>
              </CommentsDock>
              <NavBar>
                {[viewTools, displayTools].map((set, i) => (
                  <NavGroup key={i}>
                    {set.map(([name, art, menu]) => (
                      <NavButton key={name} aria-label={name}>
                        <svg width="12" height="12" viewBox="0 0 12 12">{art}</svg>
                        {menu && <Caret />}
                      </NavButton>
                    ))}
                  </NavGroup>
                ))}
              </NavBar>
            </Canvas>

            <Timeline>
              {playPaths.map(([name, d]) => (
                <PlayButton key={name} aria-label={name}>
                  <svg width="12" height="12" viewBox="0 0 14 14"><path d={d} fill="#444" stroke="#444" strokeWidth="1" /></svg>
                </PlayButton>
              ))}
              <History>
                <svg width="40" height="24" viewBox="0 0 40 24">
                  <path d="M3 6h9v10H3z" fill="#fff" stroke="#777" strokeWidth=".8" /><path d="M2 5h2v2H2zM11 5h2v2h-2zM2 15h2v2H2z" fill="#555" />
                  <path d="M8 16l4-5 2 1.500-4 4z" fill="#f2a45c" />
                  <path d="M18 8q6-4 12 0v6l-3 3q-3-2-6 0l-3-3z" fill="#4a9ad8" /><path d="M18 8q6-4 12 0l-2 3q-4-2-8 0z" fill="#8cc5ef" /><path d="M19 5q5-3 10 0" fill="none" stroke="#333" strokeWidth=".8" />
                  <path d="M8 18v4h16v-4" fill="none" stroke="#bbb" />
                  <path d="M27.500 2h8v3l-4 3.500-4-3.500z" fill="#555" /><path d="M31.500 6v16" stroke="#444" strokeWidth="1.200" />
                </svg>
              </History>
              <button aria-label="Timeline settings"><Gear s={12} c="#8a8a8a" /></button>
            </Timeline>
          </Workspace>
        </Body>

        <Taskbar>
          <Pinned>
            {tasks.map((t) => (
              <TaskButton key={t.name} aria-label={t.name} $open={t.open} $active={t.active}>{t.art}</TaskButton>
            ))}
          </Pinned>
          <Tray>
            {tray.map(([name, art]) => (
              <TrayButton key={name} aria-label={name}><svg width="12" height="12" viewBox="0 0 12 12">{art}</svg></TrayButton>
            ))}
            <Language>ENG</Language>
            <Clock><span>10:40 PM</span><span>2020-03-30</span></Clock>
            <button aria-label="Action center">
              <svg width="18" height="18" viewBox="0 0 18 18"><path d="M1 1h12v9H8l-3 3v-3H1z" fill="#fff" /><path d="M3 3.500h8M3 5.500h8M3 7.500h6" stroke="#242f35" strokeWidth=".8" /><circle cx="12" cy="12" r="5" fill="#3d474d" stroke="#aaa" strokeWidth=".7" /><text x="12" y="14.500" textAnchor="middle" fontSize="7" fontWeight="700" fill="#fff">4</text></svg>
            </button>
          </Tray>
        </Taskbar>
      </Desktop>
    </>
  );
}
